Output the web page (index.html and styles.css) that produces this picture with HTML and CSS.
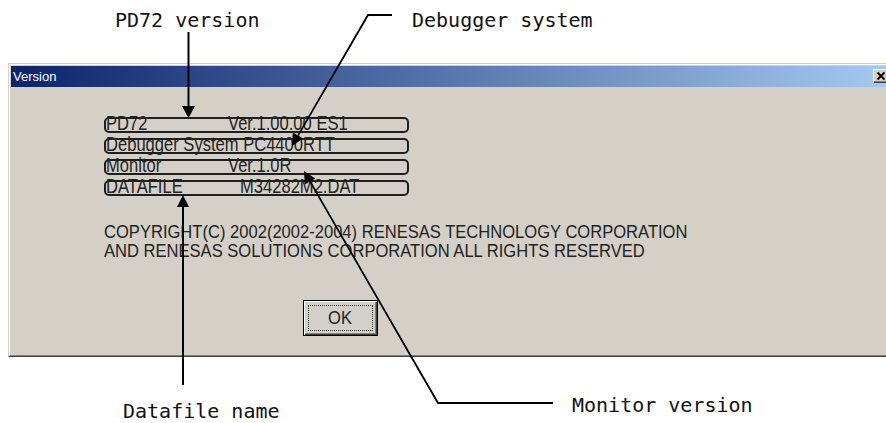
FILE: index.html
```html
<!DOCTYPE html>
<html lang="en">
<head>
<meta charset="utf-8">
<title>Version dialog</title>
<link rel="stylesheet" href="styles.css">
</head>
<body>
<div class="page">
  <div class="window">
    <div class="titlebar">
      <span class="title">Version</span>
      <span class="close">
        <svg width="16" height="14" viewBox="0 0 16 14"><path d="M4.5 3.5 L11.5 10.5 M11.5 3.5 L4.5 10.5" stroke="#000" stroke-width="1.8" fill="none"/></svg>
      </span>
    </div>
    <div class="client">
      <div class="fields">
        <div class="field"><span class="k sq tall">PD72</span><span class="sq tall">Ver.1.00.00 ES1</span></div>
        <div class="field"><span class="sq tall">Debugger System PC4400RTT</span></div>
        <div class="field"><span class="k sq tall">Monitor</span><span class="sq tall">Ver.1.0R</span></div>
        <div class="field"><span class="k k-wide sq tall">DATAFILE</span><span class="sq tall">M34282M2.DAT</span></div>
      </div>
      <div class="copyright">
        <div><span class="sq">COPYRIGHT(C) 2002(2002-2004) RENESAS TECHNOLOGY CORPORATION</span></div>
        <div><span class="sq">AND RENESAS SOLUTIONS CORPORATION ALL RIGHTS RESERVED</span></div>
      </div>
      <button class="ok" type="button"><span class="focus"><span class="sq sq-c">OK</span></span></button>
    </div>
  </div>

  <svg class="callouts" width="886" height="423" viewBox="0 0 886 423">
    <g stroke="#000" stroke-width="2" fill="none">
      <line x1="188.5" y1="32" x2="188.5" y2="108"/>
      <polyline points="392,15 368,15 298,135.6" stroke-width="1.8"/>
      <polyline points="553,403 438,403 310,181.4" stroke-width="1.8"/>
      <line x1="183" y1="385" x2="183" y2="206"/>
    </g>
    <g fill="#000">
      <polygon points="182,106 195,106 188.5,118"/>
      <polygon points="303.2,138.6 292.8,132.6 292,146"/>
      <polygon points="315.2,178.4 304.8,184.4 304,171"/>
      <polygon points="177,207 189,207 183,195"/>
    </g>
  </svg>
  <span class="label label-pd72">PD72 version</span>
  <span class="label label-dbg">Debugger system</span>
  <span class="label label-data">Datafile name</span>
  <span class="label label-mon">Monitor version</span>
</div>
</body>
</html>
```

FILE: styles.css
```css
html, body {
  margin: 0;
  padding: 0;
  background: #fff;
  overflow: hidden;
}

.page {
  position: relative;
  width: 886px;
  height: 423px;
  overflow: hidden;
  font-family: "Liberation Sans", Arial, sans-serif;
}

.window {
  width: 886px;
  box-sizing: border-box;
  margin: 63px 0 0 8px;
  background: #d4d0c8;
  border-top: 1px solid #d4d0c8;
  border-left: 1px solid #d4d0c8;
  border-bottom: 1px solid #404040;
  padding: 2px 0 2px 2px;
  box-shadow: inset 1px 1px #fff, inset 0 -1px #808080;
}

.titlebar {
  height: 21px;
  display: flex;
  align-items: flex-start;
  justify-content: space-between;
  background: linear-gradient(to right, #0a246a 0%, #a6caf0 100%);
}

.title {
  color: #fff;
  font-size: 13px;
  line-height: 21px;
  padding-left: 2px;
}

.close {
  width: 16px;
  height: 14px;
  margin: 3px 5px 0 0;
  background: #d4d0c8;
  box-shadow: inset 1px 1px #fff, inset -1px -1px #404040, inset -2px -2px #808080;
  display: block;
}

.close svg {
  display: block;
}

.client {
  height: 267px;
  box-sizing: border-box;
  padding: 30px 0 0 93px;
  color: #222;
  font-size: 18px;
}

.fields {
  display: flex;
  flex-direction: column;
  gap: 5px;
}

.field {
  width: 305px;
  height: 16px;
  box-sizing: border-box;
  border: 2px solid #1e1e1e;
  border-radius: 5px;
  display: flex;
  line-height: 11px;
  white-space: nowrap;
}

.k {
  width: 122px;
  flex-shrink: 0;
}

.k-wide {
  width: 134px;
}

.sq {
  display: inline-block;
  transform: scaleX(0.92);
  transform-origin: left center;
  white-space: nowrap;
}

.sq.tall {
  transform: scale(0.92, 1.08);
}

.sq-c {
  transform-origin: center center;
}

.copyright {
  margin-top: 27px;
  line-height: 19px;
}

.ok {
  display: flex;
  margin: 39px 0 0 199px;
  width: 75px;
  height: 36px;
  box-sizing: border-box;
  padding: 4px;
  border: 1px solid #000;
  background: #d4d0c8;
  box-shadow: inset 1px 1px #fff, inset -1px -1px #404040, inset -2px -2px #808080;
  font-family: "Liberation Sans", Arial, sans-serif;
  font-size: 18px;
  color: #222;
}

.focus {
  flex: 1;
  display: flex;
  align-items: center;
  justify-content: center;
  border: 1px dotted #333;
  line-height: 18px;
}

.callouts {
  position: absolute;
  top: 0;
  left: 0;
  pointer-events: none;
}

.label {
  position: absolute;
  font-family: "DejaVu Sans Mono", "Liberation Mono", monospace;
  font-size: 20px;
  line-height: 20px;
  color: #111;
  white-space: nowrap;
}

.label-pd72 { left: 115px; top: 10px; }
.label-dbg { left: 412px; top: 10px; }
.label-data { left: 123px; top: 401px; }
.label-mon { left: 572px; top: 395px; }
```
